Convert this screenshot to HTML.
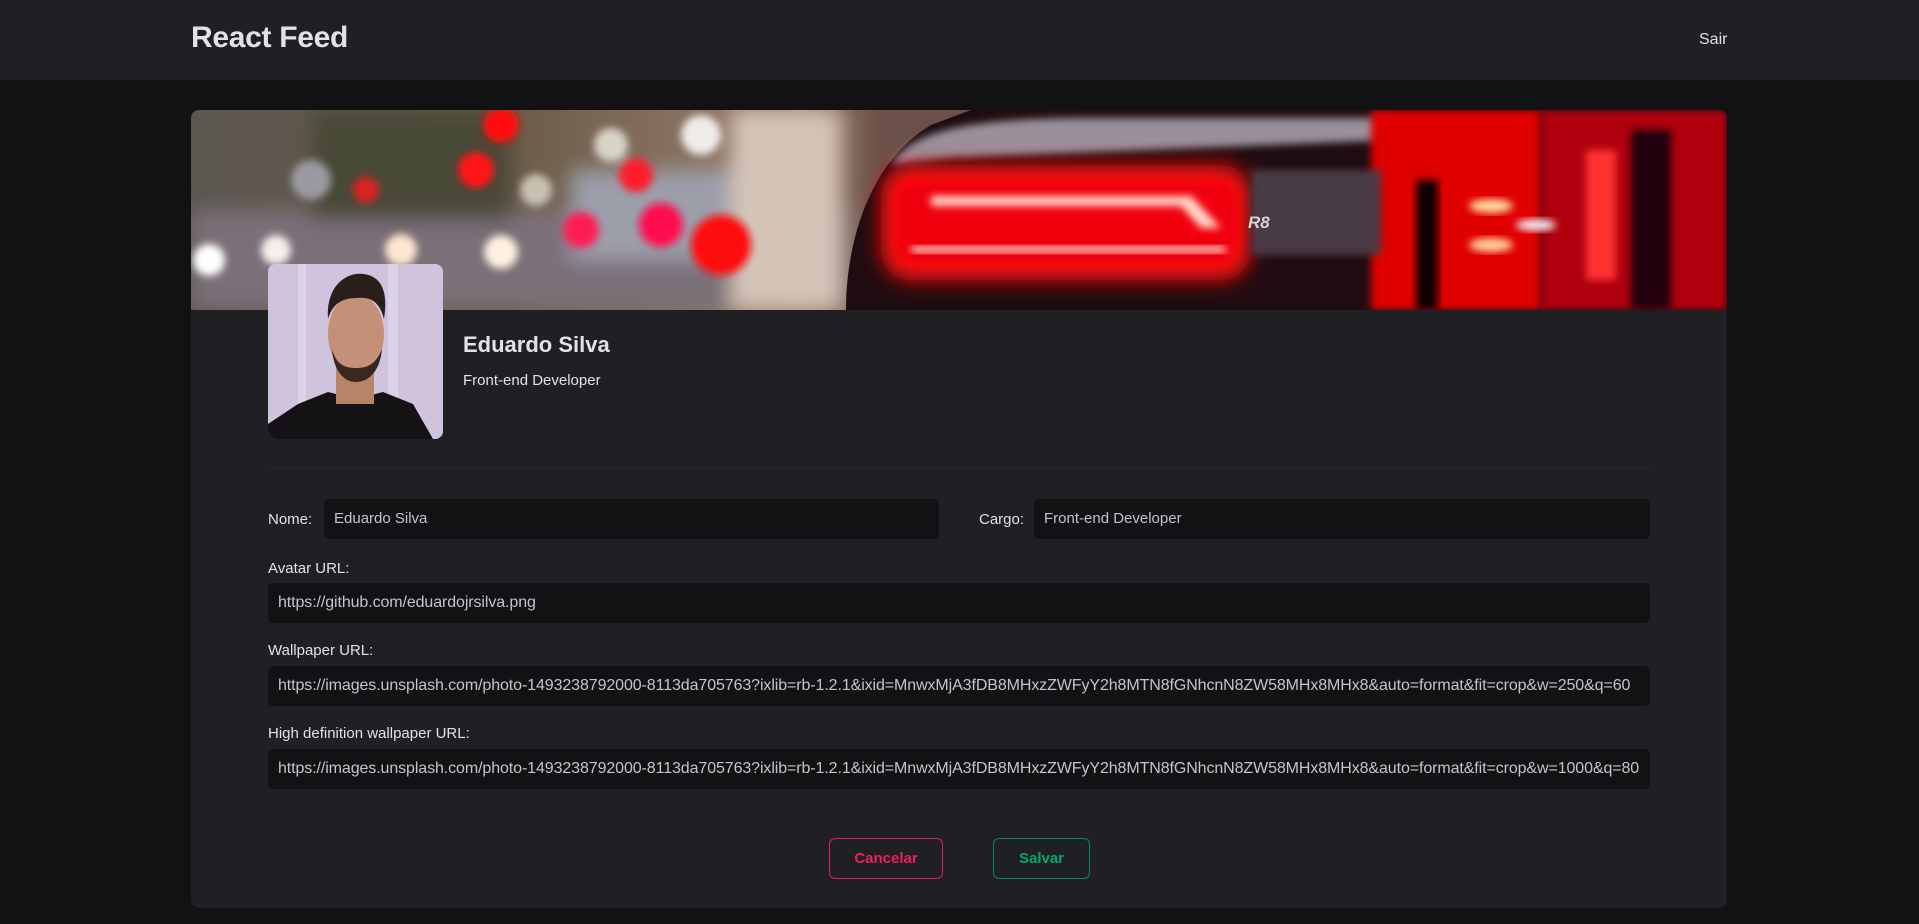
<!DOCTYPE html>
<html><head><meta charset="utf-8">
<style>
*{box-sizing:border-box;margin:0;padding:0}
body{width:1919px;height:924px;background:#121214;font-family:"Liberation Sans",sans-serif;color:#e1e1e6;overflow:hidden;position:relative}
.hdr{position:absolute;left:0;top:0;width:1919px;height:80px;background:#202024}
.logo{position:absolute;left:191px;top:21px;font-size:30px;font-weight:bold;color:#e1e1e6;letter-spacing:-0.3px}
.sair{position:absolute;left:1699px;top:31px;font-size:16px;color:#e1e1e6}
.card{position:absolute;left:191px;top:110px;width:1536px;height:798px;background:#202024;border-radius:8px;overflow:hidden}
.banner{position:absolute;left:0;top:0;width:1536px;height:200px}
.av{position:absolute;left:77px;top:154px;width:175px;height:175px;border-radius:8px;overflow:hidden;background:#cfc3de}
.name{position:absolute;left:272px;top:222px;font-size:22px;font-weight:bold;color:#e1e1e6}
.role{position:absolute;left:272px;top:262px;font-size:15px;color:#e1e1e6}
.sep{position:absolute;left:77px;top:358px;width:1382px;height:1px;background:#29292e}
.lbl{position:absolute;font-size:15px;color:#e1e1e6}
.inp{position:absolute;height:40px;background:#121214;border-radius:5px;font-size:15px;color:#c4c4cc;padding:0 10px;line-height:40px;white-space:nowrap;overflow:hidden}
.url{font-size:16px;letter-spacing:-0.1px}
.btn{position:absolute;height:41px;border-radius:6px;font-size:15px;font-weight:bold;text-align:center;line-height:39px}
</style></head><body>
<div class="hdr"><div class="logo">React Feed</div><div class="sair">Sair</div></div>
<div class="card">
<svg class="banner" viewBox="0 0 1536 200" width="1536" height="200">
<defs>
<filter id="b" x="-20%" y="-20%" width="140%" height="140%"><feGaussianBlur stdDeviation="10"/></filter>
<filter id="b2" x="-20%" y="-20%" width="140%" height="140%"><feGaussianBlur stdDeviation="4"/></filter>
<linearGradient id="g" x1="0" y1="0" x2="1" y2="0">
<stop offset="0" stop-color="#5a5650"/><stop offset="0.2" stop-color="#6a5a48"/><stop offset="0.4" stop-color="#9a8070"/><stop offset="0.45" stop-color="#6a5048"/>
</linearGradient>
</defs>
<rect width="1536" height="200" fill="url(#g)"/>
<g filter="url(#b)">
<rect x="0" y="100" width="660" height="100" fill="#7a7078"/>
<rect x="380" y="60" width="200" height="90" fill="#9c9eaa"/>
<rect x="540" y="0" width="110" height="200" fill="#d4c4b8"/>
<rect x="120" y="0" width="200" height="110" fill="#4a4a38"/>
</g>
<g filter="url(#b2)">
<circle cx="18" cy="150" r="16" fill="#fff"/><circle cx="85" cy="140" r="15" fill="#f4f0ec"/>
<circle cx="210" cy="140" r="16" fill="#ffe8d0"/><circle cx="310" cy="142" r="17" fill="#fff0e0"/>
<circle cx="310" cy="15" r="18" fill="#ff1010"/><circle cx="285" cy="60" r="18" fill="#ff1515"/>
<circle cx="175" cy="80" r="13" fill="#dd2020"/><circle cx="420" cy="35" r="17" fill="#d8d4c8"/>
<circle cx="445" cy="65" r="17" fill="#ff1a2a"/><circle cx="390" cy="120" r="18" fill="#ff1a55"/>
<circle cx="470" cy="115" r="22" fill="#ff1050"/><circle cx="530" cy="135" r="30" fill="#ff1010"/>
<circle cx="345" cy="80" r="16" fill="#c8c0b0"/><circle cx="510" cy="25" r="20" fill="#f0ece8"/>
<circle cx="120" cy="70" r="20" fill="#9a9aa0"/>
</g>
<path d="M655 200 C655 130 680 50 740 15 L780 0 L1536 0 L1536 200 Z" fill="#1e0c10"/>
<path d="M700 55 C720 20 780 8 900 8 L1200 8 L1200 30 L760 48 Z" fill="#9a909a" filter="url(#b2)"/>
<rect x="1180" y="0" width="170" height="200" fill="#e00000" filter="url(#b2)"/>
<rect x="1350" y="0" width="186" height="200" fill="#b00008" filter="url(#b2)"/>
<rect x="1440" y="20" width="40" height="180" fill="#200008" filter="url(#b2)"/>
<rect x="1225" y="70" width="22" height="130" fill="#100004" filter="url(#b2)"/>
<rect x="1395" y="40" width="30" height="130" fill="#ff3030" filter="url(#b2)"/>
<g filter="url(#b)"><rect x="690" y="55" width="370" height="115" rx="30" fill="#ff0a10"/></g>
<rect x="705" y="72" width="340" height="80" rx="18" fill="#f00008" filter="url(#b2)"/>
<path d="M740 86 L1000 86 L1030 118 L1010 118 L990 96 L740 96 Z" fill="#ffd8c8" filter="url(#b2)"/>
<rect x="720" y="136" width="315" height="7" rx="3" fill="#ffd0c0" filter="url(#b2)"/>
<rect x="1060" y="60" width="130" height="85" fill="#4a3a44" filter="url(#b2)"/>
<text x="1057" y="118" font-size="17" font-style="italic" font-weight="bold" fill="#d8d0d8" font-family="Liberation Sans,sans-serif">R8</text>
<ellipse cx="1300" cy="96" rx="22" ry="7" fill="#ffd8a0" filter="url(#b2)"/>
<ellipse cx="1300" cy="135" rx="22" ry="7" fill="#ffd0a0" filter="url(#b2)"/>
<ellipse cx="1345" cy="115" rx="20" ry="6" fill="#f0e8f0" filter="url(#b2)"/>
</svg>
<div class="av">
<svg width="175" height="175" viewBox="0 0 175 175">
<rect width="175" height="175" fill="#cfc3de"/>
<rect x="30" y="0" width="8" height="175" fill="#dcd2e8"/><rect x="120" y="0" width="10" height="175" fill="#dcd2e8"/>
<path d="M0 160 L30 140 L60 128 L88 135 L115 128 L145 140 L165 175 L0 175 Z" fill="#141214"/>
<rect x="68" y="100" width="38" height="40" fill="#b88468"/>
<ellipse cx="88" cy="70" rx="28" ry="40" fill="#c49078"/>
<path d="M60 55 C58 20 80 8 95 10 C115 12 120 30 116 55 C112 40 105 32 88 34 C72 34 64 42 60 55 Z" fill="#2a1e1a"/>
<path d="M64 85 C66 110 78 118 88 118 C100 118 112 108 114 85 C108 100 100 104 88 104 C76 104 68 100 64 85 Z" fill="#3a2820"/>
</svg>
</div>
<div class="name">Eduardo Silva</div>
<div class="role">Front-end Developer</div>
<div class="sep"></div>
<div class="lbl" style="left:77px;top:401px">Nome:</div>
<div class="inp" style="left:133px;top:389px;width:615px">Eduardo Silva</div>
<div class="lbl" style="left:788px;top:401px">Cargo:</div>
<div class="inp" style="left:843px;top:389px;width:616px">Front-end Developer</div>
<div class="lbl" style="left:77px;top:450px">Avatar URL:</div>
<div class="inp url" style="left:77px;top:473px;width:1382px">https://github.com/eduardojrsilva.png</div>
<div class="lbl" style="left:77px;top:532px">Wallpaper URL:</div>
<div class="inp url" style="left:77px;top:556px;width:1382px">https://images.unsplash.com/photo-1493238792000-8113da705763?ixlib=rb-1.2.1&amp;ixid=MnwxMjA3fDB8MHxzZWFyY2h8MTN8fGNhcnN8ZW58MHx8MHx8&amp;auto=format&amp;fit=crop&amp;w=250&amp;q=60</div>
<div class="lbl" style="left:77px;top:615px">High definition wallpaper URL:</div>
<div class="inp url" style="left:77px;top:639px;width:1382px">https://images.unsplash.com/photo-1493238792000-8113da705763?ixlib=rb-1.2.1&amp;ixid=MnwxMjA3fDB8MHxzZWFyY2h8MTN8fGNhcnN8ZW58MHx8MHx8&amp;auto=format&amp;fit=crop&amp;w=1000&amp;q=80</div>
<div class="btn" style="left:638px;top:728px;width:114px;border:1px solid #e8195a;color:#f01e5a">Cancelar</div>
<div class="btn" style="left:802px;top:728px;width:97px;border:1px solid #00875f;color:#00a86b">Salvar</div>
</div>
</body></html>
